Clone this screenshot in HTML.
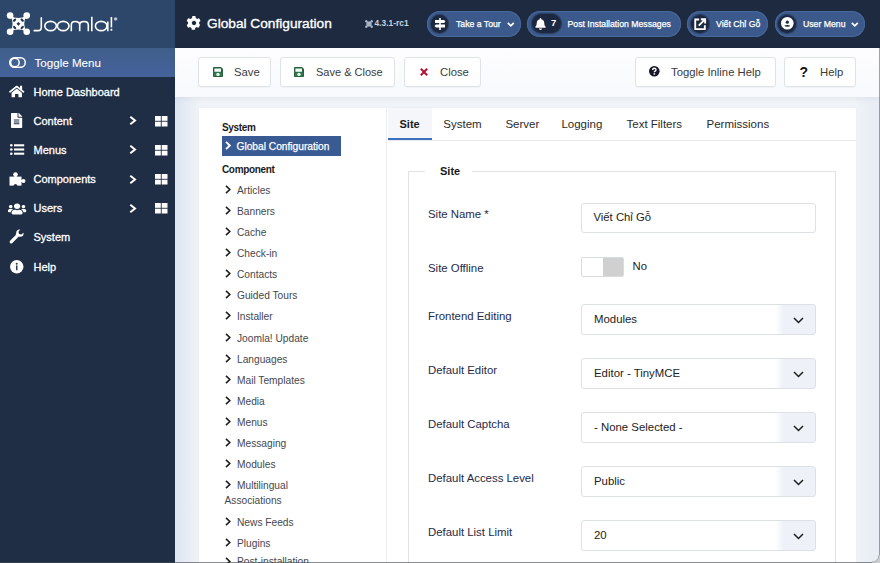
<!DOCTYPE html>
<html><head><meta charset="utf-8">
<style>
*{box-sizing:border-box;margin:0;padding:0}
html,body{width:880px;height:563px;overflow:hidden}
body{position:relative;background:linear-gradient(90deg,#dce5f2 175px,#e4eaf4 183px,#eef2f6 196px,#f0f3f7 199px,#f0f3f7 856px,#e9eef6 870px);font-family:"Liberation Sans",sans-serif;color:#212529}
.a{position:absolute}
.t{position:absolute;white-space:nowrap;line-height:1}
svg{position:absolute;overflow:visible}
#hdr{left:0;top:0;width:880px;height:48px;background:#1d2a40}
#logo{left:0;top:0;width:175px;height:48px;background:#2d476b}
#side{left:0;top:48px;width:175px;height:515px;background:#1f2d45}
#tog{left:0;top:48px;width:175px;height:29px;background:linear-gradient(180deg,#405e8a,#44639c)}
.mi{color:#fff;font-size:11px;-webkit-text-stroke:0.3px #fff}
.pill{position:absolute;top:11px;height:26px;border-radius:13px;background:#3b5a8b;box-shadow:inset 0 0 0 1px #48679a}
.pc{position:absolute;top:4.25px;width:17.5px;height:17.5px;border-radius:9px;background:#1c2840;box-shadow:0 0 0 1.2px #2c4166}
.pt{position:absolute;color:#fff;font-size:8.7px;line-height:1;white-space:nowrap;top:9px;-webkit-text-stroke:0.25px #fff}
#tb{left:175px;top:48px;width:705px;height:49px;background:linear-gradient(180deg,#fdfdfe,#f7f9fc);box-shadow:0 2px 6px rgba(30,50,90,.06)}
.btn{position:absolute;top:57px;height:30px;background:#fff;border:1px solid #dfe3e8;border-radius:3px;box-shadow:0 1px 1px rgba(0,0,0,.03)}
.bt{position:absolute;color:#3b3b3b;font-size:11.3px;line-height:1;white-space:nowrap;top:9px}
#lp{left:199px;top:108px;width:188px;height:455px;background:#fff;border-right:1px solid #f0f2f5;box-shadow:0 0 3px rgba(40,60,100,.03)}
#rp{left:387px;top:108px;width:469px;height:455px;background:#fff;box-shadow:0 0 3px rgba(40,60,100,.03)}
.li{position:absolute;color:#45484d;font-size:10.2px;line-height:1;white-space:nowrap}
.lh{position:absolute;color:#1b1b1b;font-size:10px;letter-spacing:-0.35px;font-weight:700;line-height:1;white-space:nowrap}
.lab{position:absolute;left:428px;color:#262a48;font-size:11.4px;line-height:1;white-space:nowrap}
.sel{position:absolute;left:581px;width:235px;height:30.5px;border:1px solid #dde1e6;border-radius:3px;background:linear-gradient(90deg,#fff 0,#fff 83%,#eef1f7 86.5%,#eef1f7 100%)}
.sv{position:absolute;left:12px;top:8.6px;font-size:11.4px;color:#222;line-height:1;white-space:nowrap}
.tab{position:absolute;top:118.6px;font-size:11.5px;color:#2b2b2b;line-height:1;white-space:nowrap}
</style></head><body>
<div class="a" id="hdr"></div>
<div class="a" id="logo"></div>
<div class="a" id="side"></div>
<div class="a" id="tog"></div>

<!-- logo -->
<svg style="left:0;top:0" width="125" height="48" viewBox="0 0 125 48">
 <path d="M10.1 15.6 Q18.4 20.6 26.7 15.6 Q21.8 23.8 26.7 31.8 Q18.4 27 10.1 31.8 Q15 23.8 10.1 15.6 Z" fill="#fff"/>
 <g fill="#fff"><circle cx="10.1" cy="15.6" r="3.3"/><circle cx="26.7" cy="15.6" r="3.3"/><circle cx="10.1" cy="31.8" r="3.3"/><circle cx="26.7" cy="31.8" r="3.3"/></g>
 <g fill="#22344f"><ellipse cx="14.6" cy="20.1" rx="2" ry="1.15" transform="rotate(-45 14.6 20.1)"/><ellipse cx="22.2" cy="20.1" rx="2" ry="1.15" transform="rotate(45 22.2 20.1)"/><ellipse cx="14.6" cy="27.5" rx="2" ry="1.15" transform="rotate(45 14.6 27.5)"/><ellipse cx="22.2" cy="27.5" rx="2" ry="1.15" transform="rotate(-45 22.2 27.5)"/></g>
 <path d="M18.4 21.9 L20.3 23.8 L18.4 25.7 L16.5 23.8 Z" fill="#22344f"/>
 <g fill="none" stroke="#fff" stroke-width="1.6" stroke-linecap="butt">
  <path d="M41.3 17.2 V27.2 Q41.3 30.6 37.9 30.6 H33.6"/>
  <ellipse cx="50.6" cy="26" rx="5.8" ry="4.6"/>
  <ellipse cx="63.2" cy="26" rx="5.8" ry="4.6"/>
  <path d="M71.3 31.2 V25 Q71.3 21.5 75 21.5 Q79.7 21.5 79.7 25 V31.2 M79.7 25 Q79.7 21.5 84 21.5 Q88.3 21.5 88.3 25 V31.2"/>
  <path d="M91.8 16.8 V31.2"/>
  <ellipse cx="101.2" cy="26" rx="5.8" ry="4.6"/>
  <path d="M107.8 21.4 V31.2"/>
  <path d="M111.4 17 V27.4"/>
 </g>
 <rect x="110.5" y="28.8" width="1.8" height="1.9" fill="#fff"/>
 <circle cx="115.6" cy="18.9" r="1.7" fill="#b9c4d6"/>
</svg>

<!-- header title -->
<svg style="left:186.7px;top:16px" width="14" height="14" viewBox="0 0 512 512"><path fill="#fff" d="M487 316l-43-25c4-24 4-48 0-71l43-25c5-3 7-9 5-14-11-36-31-69-56-96-4-4-10-5-15-2l-43 25c-18-16-39-28-62-36V22c0-6-4-11-9-12-37-8-75-8-111 0-5 1-9 6-9 12v50c-23 8-44 20-62 36L62 83c-5-3-11-2-15 2-25 27-45 60-56 96-2 5 0 11 5 14l43 25c-4 24-4 48 0 71l-43 25c-5 3-7 9-5 14 11 36 31 69 56 96 4 4 10 5 15 2l43-25c18 16 39 28 62 36v50c0 6 4 11 9 12 37 8 75 8 111 0 5-1 9-6 9-12v-50c23-8 44-20 62-36l43 25c5 3 11 2 15-2 25-27 45-60 56-96 2-5 0-11-5-14zM256 336c-44 0-80-36-80-80s36-80 80-80 80 36 80 80-36 80-80 80z"/></svg>
<div class="t" style="left:207px;top:17px;color:#fff;font-size:13.7px;-webkit-text-stroke:0.35px #fff">Global Configuration</div>
<svg style="left:365px;top:19.6px" width="8" height="8" viewBox="0 0 8 8"><g fill="none" stroke="#aab5c7" stroke-width="1.3"><path d="M1.5 1.5L6.5 6.5M6.5 1.5L1.5 6.5"/><path d="M4 1.8L6.2 4L4 6.2L1.8 4Z"/></g><g fill="#aab5c7"><circle cx="1.3" cy="1.3" r="1.2"/><circle cx="6.7" cy="1.3" r="1.2"/><circle cx="1.3" cy="6.7" r="1.2"/><circle cx="6.7" cy="6.7" r="1.2"/></g></svg>
<div class="t" style="left:374.6px;top:19.3px;color:#c8d1de;font-size:8.4px;font-weight:700">4.3.1-rc1</div>

<!-- pills -->
<div class="pill" style="left:427px;width:94px"><div class="pc" style="left:3.75px"></div><div class="pt" style="left:29px">Take a Tour</div></div>
<div class="pill" style="left:527px;width:154px"><div class="pc" style="left:5px;width:28.5px;top:3px;height:19px;border-radius:9.5px"></div><div class="t" style="left:24px;top:7.2px;color:#fff;font-size:9.5px;font-weight:700">7</div><div class="pt" style="left:40.5px">Post Installation Messages</div></div>
<div class="pill" style="left:687px;width:81px"><div class="pc" style="left:4px"></div><div class="pt" style="left:29px">Viết Chỉ Gỗ</div></div>
<div class="pill" style="left:775px;width:90px"><div class="pc" style="left:3.25px"></div><div class="pt" style="left:28px">User Menu</div></div>
<!-- pill icons -->
<svg style="left:434px;top:18px" width="12" height="12" viewBox="0 0 12 12"><g fill="#fff"><rect x="5.2" y="0" width="1.6" height="12"/><path d="M1 2H10L11.5 3.5L10 5H1Z"/><path d="M2 6.5H11V9.5H2L0.5 8Z"/></g></svg>
<svg style="left:506.8px;top:21.8px" width="7.6" height="5" viewBox="0 0 7.6 5"><path d="M0.8 0.8L3.8 3.8L6.8 0.8" fill="none" stroke="#fff" stroke-width="1.7"/></svg>
<svg style="left:535px;top:17.5px" width="11" height="12" viewBox="0 0 448 512"><path fill="#fff" d="M224 512c35 0 64-29 64-64H160c0 35 29 64 64 64zm215-150c-19-21-55-52-55-154 0-78-54-140-128-155V32c0-18-14-32-32-32s-32 14-32 32v21C118 68 64 130 64 208c0 102-36 133-55 154-6 6-9 14-9 22 0 16 13 32 32 32h384c19 0 32-16 32-32 0-8-3-16-9-22z"/></svg>
<svg style="left:693.6px;top:18px" width="12.4" height="12.4" viewBox="0 0 12 12"><g fill="none" stroke="#fff" stroke-width="1.8"><path d="M5 1.5H1.2V10.8H10.5V7"/><path d="M4.6 7.4L10.6 1.4M6.6 1.2H10.8V5.4"/></g></svg>
<svg style="left:780.8px;top:17.3px" width="12.6" height="12.6" viewBox="0 0 12 12"><circle cx="6" cy="6" r="6" fill="#fff"/><circle cx="6" cy="4.9" r="1.5" fill="#1c2840"/><path d="M3.2 8.2Q6 7.2 8.8 8.2Q8.6 9.4 6 9.4Q3.4 9.4 3.2 8.2Z" fill="#1c2840"/></svg>
<svg style="left:850.8px;top:21.6px" width="7.6" height="5" viewBox="0 0 7.6 5"><path d="M0.8 0.8L3.8 3.8L6.8 0.8" fill="none" stroke="#fff" stroke-width="1.7"/></svg>

<!-- sidebar menu -->
<div class="t mi" style="left:34.5px;top:56.5px;font-size:11.6px;-webkit-text-stroke:0.1px #fff">Toggle Menu</div>
<div class="t mi" style="left:33.5px;top:87px">Home Dashboard</div>
<div class="t mi" style="left:33.5px;top:116px">Content</div>
<div class="t mi" style="left:33.5px;top:145px">Menus</div>
<div class="t mi" style="left:33.5px;top:173.8px">Components</div>
<div class="t mi" style="left:33.5px;top:202.8px">Users</div>
<div class="t mi" style="left:33.5px;top:232.4px">System</div>
<div class="t mi" style="left:33.5px;top:261.6px">Help</div>
<!-- sidebar icons -->
<svg style="left:8.5px;top:57px" width="17" height="11" viewBox="0 0 17 11"><rect x="0.75" y="0.75" width="15.5" height="9.5" rx="4.75" fill="none" stroke="#fff" stroke-width="1.5"/><circle cx="5.9" cy="5.5" r="4.3" fill="none" stroke="#fff" stroke-width="1.5"/></svg>
<svg style="left:8.7px;top:85.2px" width="15.5" height="12.8" viewBox="0 0 576 500" preserveAspectRatio="none"><path fill="#fff" d="M280 148L96 300v164c0 9 7 16 16 16h112V368c0-9 7-16 16-16h96c9 0 16 7 16 16v112h112c9 0 16-7 16-16V300L296 148c-5-4-11-4-16 0zM571 251L488 183V44c0-7-5-12-12-12h-56c-7 0-12 5-12 12v73L318 43c-18-15-43-15-61 0L4 251c-5 4-6 12-2 17l26 31c4 5 12 6 17 2L280 107c5-4 11-4 16 0l235 194c5 4 13 3 17-2l26-31c4-5 3-13-2-17z"/></svg>
<svg style="left:11.4px;top:113.4px" width="11.2" height="15" viewBox="0 0 384 512" preserveAspectRatio="none"><path fill="#fff" d="M224 136V0H24C11 0 0 11 0 24v464c0 13 11 24 24 24h336c13 0 24-11 24-24V160H248c-13 0-24-11-24-24zm64 236c0 7-5 12-12 12H108c-7 0-12-5-12-12v-8c0-7 5-12 12-12h168c7 0 12 5 12 12v8zm0-64c0 7-5 12-12 12H108c-7 0-12-5-12-12v-8c0-7 5-12 12-12h168c7 0 12 5 12 12v8zm0-72v8c0 7-5 12-12 12H108c-7 0-12-5-12-12v-8c0-7 5-12 12-12h168c7 0 12 5 12 12zm96-114v6H256V0h6c6 0 12 3 17 7l98 98c4 5 7 11 7 17z"/></svg>
<svg style="left:9.8px;top:144.2px" width="14.2" height="11" viewBox="0 0 14.2 11"><g fill="#fff"><circle cx="1.3" cy="1.3" r="1.3"/><circle cx="1.3" cy="5.5" r="1.3"/><circle cx="1.3" cy="9.7" r="1.3"/><rect x="4" y="0.25" width="10.2" height="2.1"/><rect x="4" y="4.45" width="10.2" height="2.1"/><rect x="4" y="8.65" width="10.2" height="2.1"/></g></svg>
<svg style="left:8.5px;top:171.5px" width="17" height="14" viewBox="0 0 17 14"><g fill="#fff"><rect x="0.5" y="4.6" width="12" height="9"/><circle cx="6.5" cy="2.5" r="2.3"/><rect x="5.5" y="3" width="2" height="2"/><circle cx="14.4" cy="9" r="2.1"/><rect x="12" y="8" width="2" height="2"/></g><circle cx="6.5" cy="13.6" r="1.7" fill="#1f2d45"/></svg>
<svg style="left:7.8px;top:202.6px" width="18.2" height="12" viewBox="0 10 640 490" preserveAspectRatio="none"><path fill="#fff" d="M96 224c35 0 64-29 64-64s-29-64-64-64-64 29-64 64 29 64 64 64zm448 0c35 0 64-29 64-64s-29-64-64-64-64 29-64 64 29 64 64 64zm32 32h-64c-18 0-34 7-45 19 40 22 69 62 75 109h66c18 0 32-14 32-32v-32c0-35-29-64-64-64zm-256 0c62 0 112-50 112-112S382 32 320 32 208 82 208 144s50 112 112 112zm77 32h-8c-21 10-44 16-69 16s-48-6-69-16h-8c-64 0-115 52-115 115v29c0 27 21 48 48 48h288c27 0 48-21 48-48v-29c0-63-52-115-115-115zm-223-13c-11-12-27-19-45-19H64c-35 0-64 29-64 64v32c0 18 14 32 32 32h66c6-47 35-87 75-109z"/></svg>
<svg style="left:8.9px;top:229.4px" width="15" height="15" viewBox="0 0 15 15"><path d="M2.2 12.8L8.2 6.8" stroke="#fff" stroke-width="3.2" stroke-linecap="round"/><path fill="#fff" d="M7.3 3.6Q7.3 0.6 10.6 0.4L11.2 0.5L9.4 2.7L10.1 4.9L12.3 5.6L14.5 3.8L14.6 4.4Q14.4 7.7 11.4 7.7Q9.9 7.7 8.8 7.2L6.6 5.6Q7.3 4.7 7.3 3.6Z"/></svg>
<svg style="left:10.1px;top:259.6px" width="13.5" height="13.5" viewBox="0 0 14 14"><circle cx="7" cy="7" r="7" fill="#fff"/><circle cx="7" cy="3.9" r="1" fill="#2a3550"/><rect x="6.25" y="5.6" width="1.5" height="5" fill="#2a3550"/></svg>
<!-- chevrons + grid icons -->
<svg style="left:129.3px;top:116px" width="8" height="9" viewBox="0 0 8 9"><path d="M1.3 0.8L6 4.5L1.3 8.2" fill="none" stroke="#fff" stroke-width="2"/></svg>
<svg style="left:129.3px;top:145px" width="8" height="9" viewBox="0 0 8 9"><path d="M1.3 0.8L6 4.5L1.3 8.2" fill="none" stroke="#fff" stroke-width="2"/></svg>
<svg style="left:129.3px;top:174.5px" width="8" height="9" viewBox="0 0 8 9"><path d="M1.3 0.8L6 4.5L1.3 8.2" fill="none" stroke="#fff" stroke-width="2"/></svg>
<svg style="left:129.3px;top:203.5px" width="8" height="9" viewBox="0 0 8 9"><path d="M1.3 0.8L6 4.5L1.3 8.2" fill="none" stroke="#fff" stroke-width="2"/></svg>
<svg style="left:154.5px;top:115.5px" width="12.5" height="10.5" viewBox="0 0 12.5 10.5"><g fill="#fff"><rect x="0" y="0" width="5.8" height="4.8"/><rect x="6.7" y="0" width="5.8" height="4.8"/><rect x="0" y="5.7" width="5.8" height="4.8"/><rect x="6.7" y="5.7" width="5.8" height="4.8"/></g></svg>
<svg style="left:154.5px;top:144.5px" width="12.5" height="10.5" viewBox="0 0 12.5 10.5"><g fill="#fff"><rect x="0" y="0" width="5.8" height="4.8"/><rect x="6.7" y="0" width="5.8" height="4.8"/><rect x="0" y="5.7" width="5.8" height="4.8"/><rect x="6.7" y="5.7" width="5.8" height="4.8"/></g></svg>
<svg style="left:154.5px;top:174px" width="12.5" height="10.5" viewBox="0 0 12.5 10.5"><g fill="#fff"><rect x="0" y="0" width="5.8" height="4.8"/><rect x="6.7" y="0" width="5.8" height="4.8"/><rect x="0" y="5.7" width="5.8" height="4.8"/><rect x="6.7" y="5.7" width="5.8" height="4.8"/></g></svg>
<svg style="left:154.5px;top:203px" width="12.5" height="10.5" viewBox="0 0 12.5 10.5"><g fill="#fff"><rect x="0" y="0" width="5.8" height="4.8"/><rect x="6.7" y="0" width="5.8" height="4.8"/><rect x="0" y="5.7" width="5.8" height="4.8"/><rect x="6.7" y="5.7" width="5.8" height="4.8"/></g></svg>

<!-- toolbar -->
<div class="a" id="tb"></div>
<div class="btn" style="left:198px;width:73px"><div class="bt" style="left:35px">Save</div></div>
<div class="btn" style="left:280px;width:115px"><div class="bt" style="left:35px;font-size:11px;top:9.2px">Save &amp; Close</div></div>
<div class="btn" style="left:404px;width:77px"><div class="bt" style="left:35px">Close</div></div>
<div class="btn" style="left:635px;width:141px"><div class="bt" style="left:35px">Toggle Inline Help</div></div>
<div class="btn" style="left:784px;width:72px"><div class="bt" style="left:35px">Help</div></div>

<!-- panels -->
<div class="a" id="lp"></div>
<div class="a" id="rp"></div>


<!-- toolbar icons -->
<svg style="left:213px;top:66.8px" width="10" height="10" viewBox="0 0 10 10"><path fill="#27633f" d="M0.8 0H8L10 2V9.2Q10 10 9.2 10H0.8Q0 10 0 9.2V0.8Q0 0 0.8 0Z"/><rect x="1.4" y="1.5" width="6.6" height="3.3" fill="#f4f8f5"/><rect x="1" y="5.4" width="8" height="3.6" fill="#2f7a4f"/><circle cx="5" cy="7.4" r="1.7" fill="#eef5ef"/></svg>
<svg style="left:294px;top:66.8px" width="10" height="10" viewBox="0 0 10 10"><path fill="#27633f" d="M0.8 0H8L10 2V9.2Q10 10 9.2 10H0.8Q0 10 0 9.2V0.8Q0 0 0.8 0Z"/><rect x="1.4" y="1.5" width="6.6" height="3.3" fill="#f4f8f5"/><rect x="1" y="5.4" width="8" height="3.6" fill="#2f7a4f"/><circle cx="5" cy="7.4" r="1.7" fill="#eef5ef"/></svg>
<svg style="left:419.6px;top:67.9px" width="8" height="8" viewBox="0 0 8 8"><path d="M0.8 0.8L7.2 7.2M7.2 0.8L0.8 7.2" stroke="#b3132f" stroke-width="2"/></svg>
<svg style="left:649px;top:66.4px" width="10.6" height="10.6" viewBox="0 0 12 12"><circle cx="6" cy="6" r="6" fill="#16162a"/><path d="M4.1 4.6Q4.1 2.6 6 2.6Q7.9 2.6 7.9 4.3Q7.9 5.3 6.8 5.9Q6 6.3 6 7.2" fill="none" stroke="#fff" stroke-width="1.6"/><rect x="5.2" y="8.1" width="1.7" height="1.7" fill="#fff"/></svg>
<div class="t" style="left:799.5px;top:64.5px;font-size:14px;font-weight:700;color:#111">?</div>

<!-- left panel headers -->
<div class="lh" style="left:222px;top:122.5px">System</div>
<div class="a" style="left:222px;top:136px;width:119px;height:20px;background:#3a5a94"></div>
<svg style="left:225px;top:140.8px" width="6" height="9" viewBox="0 0 6 9"><path d="M1 0.9L4.8 4.5L1 8.1" fill="none" stroke="#fff" stroke-width="1.9"/></svg>
<div class="li" style="left:236.5px;top:141.5px;color:#fff;-webkit-text-stroke:0.25px #fff;font-size:10.2px">Global Configuration</div>
<div class="lh" style="left:222px;top:165.3px">Component</div>

<!-- tabs -->
<div class="a" style="left:388px;top:108px;width:44px;height:32px;background:#f4f6fa"></div>
<div class="a" style="left:388px;top:140px;width:468px;height:1px;background:#e6e9ee"></div>
<div class="a" style="left:388px;top:137.5px;width:44px;height:2.5px;background:#3d6fbf"></div>
<div class="tab" style="left:399.5px;font-weight:700;color:#1a1a1a;font-size:11px">Site</div>
<div class="tab" style="left:443.3px">System</div>
<div class="tab" style="left:505.4px">Server</div>
<div class="tab" style="left:561.4px">Logging</div>
<div class="tab" style="left:626.5px">Text Filters</div>
<div class="tab" style="left:706.5px">Permissions</div>

<!-- fieldset -->
<div class="a" style="left:408px;top:171px;width:428px;height:400px;border:1px solid #dfe2e6"></div>
<div class="a" style="left:425px;top:165px;width:47px;height:12px;background:#fff"></div>
<div class="t" style="left:440px;top:165.5px;font-size:11px;font-weight:700;color:#1a1a1a">Site</div>

<!-- form -->
<div class="lab" style="top:209px">Site Name *</div>
<div class="a" style="left:581px;top:203px;width:235px;height:30px;border:1px solid #dde1e6;border-radius:3px;background:#fff"></div>
<div class="t" style="left:593.5px;top:212px;font-size:11.3px;color:#222">Viết Chỉ Gỗ</div>
<div class="lab" style="top:263px">Site Offline</div>
<div class="a" style="left:581px;top:256.5px;width:43px;height:20px;border:1px solid #d8dce2;border-radius:2px;background:linear-gradient(90deg,#fff 50%,#d0d0d0 50%)"></div>
<div class="t" style="left:632.5px;top:261px;font-size:11.3px;color:#222">No</div>
<div class="lab" style="top:310.5px">Frontend Editing</div>
<div class="sel" style="top:304px"><div class="sv">Modules</div></div>
<div class="lab" style="top:364.5px">Default Editor</div>
<div class="sel" style="top:358px"><div class="sv">Editor - TinyMCE</div></div>
<div class="lab" style="top:418.5px">Default Captcha</div>
<div class="sel" style="top:412px"><div class="sv">- None Selected -</div></div>
<div class="lab" style="top:472.5px">Default Access Level</div>
<div class="sel" style="top:466px"><div class="sv">Public</div></div>
<div class="lab" style="top:526.5px">Default List Limit</div>
<div class="sel" style="top:520px"><div class="sv">20</div></div>
<svg style="left:792.8px;top:316.6px" width="11" height="7" viewBox="0 0 11 7"><path d="M1 1L5.5 5.5L10 1" fill="none" stroke="#1e1e1e" stroke-width="1.5"/></svg>
<svg style="left:792.8px;top:370.6px" width="11" height="7" viewBox="0 0 11 7"><path d="M1 1L5.5 5.5L10 1" fill="none" stroke="#1e1e1e" stroke-width="1.5"/></svg>
<svg style="left:792.8px;top:424.6px" width="11" height="7" viewBox="0 0 11 7"><path d="M1 1L5.5 5.5L10 1" fill="none" stroke="#1e1e1e" stroke-width="1.5"/></svg>
<svg style="left:792.8px;top:478.6px" width="11" height="7" viewBox="0 0 11 7"><path d="M1 1L5.5 5.5L10 1" fill="none" stroke="#1e1e1e" stroke-width="1.5"/></svg>
<svg style="left:792.8px;top:532.6px" width="11" height="7" viewBox="0 0 11 7"><path d="M1 1L5.5 5.5L10 1" fill="none" stroke="#1e1e1e" stroke-width="1.5"/></svg>

<!-- window frame -->
<div class="a" style="left:0;top:562px;width:880px;height:1px;background:rgba(70,72,76,.63)"></div>
<div class="a" style="left:879px;top:48px;width:1px;height:515px;background:rgba(70,72,76,.5)"></div>
<svg style="left:872px;top:555px" width="8" height="8" viewBox="0 0 8 8"><path d="M8 0 V8 H0 V7 Q6 7 7 1 V0Z" fill="#c9cbce"/><path d="M0 7 Q6 7 7 0" fill="none" stroke="#a9acb0" stroke-width="1"/></svg>

<!-- left list -->
<svg style="left:225px;top:184.5px" width="6" height="9" viewBox="0 0 6 9"><path d="M1 0.9L4.8 4.5L1 8.1" fill="none" stroke="#1e1e1e" stroke-width="1.6"/></svg>
<div class="li" style="left:237px;top:185.5px">Articles</div>
<svg style="left:225px;top:205.5px" width="6" height="9" viewBox="0 0 6 9"><path d="M1 0.9L4.8 4.5L1 8.1" fill="none" stroke="#1e1e1e" stroke-width="1.6"/></svg>
<div class="li" style="left:237px;top:206.5px">Banners</div>
<svg style="left:225px;top:226.5px" width="6" height="9" viewBox="0 0 6 9"><path d="M1 0.9L4.8 4.5L1 8.1" fill="none" stroke="#1e1e1e" stroke-width="1.6"/></svg>
<div class="li" style="left:237px;top:227.5px">Cache</div>
<svg style="left:225px;top:247.5px" width="6" height="9" viewBox="0 0 6 9"><path d="M1 0.9L4.8 4.5L1 8.1" fill="none" stroke="#1e1e1e" stroke-width="1.6"/></svg>
<div class="li" style="left:237px;top:248.5px">Check-in</div>
<svg style="left:225px;top:268.5px" width="6" height="9" viewBox="0 0 6 9"><path d="M1 0.9L4.8 4.5L1 8.1" fill="none" stroke="#1e1e1e" stroke-width="1.6"/></svg>
<div class="li" style="left:237px;top:269.5px">Contacts</div>
<svg style="left:225px;top:290.0px" width="6" height="9" viewBox="0 0 6 9"><path d="M1 0.9L4.8 4.5L1 8.1" fill="none" stroke="#1e1e1e" stroke-width="1.6"/></svg>
<div class="li" style="left:237px;top:291.0px">Guided Tours</div>
<svg style="left:225px;top:311.0px" width="6" height="9" viewBox="0 0 6 9"><path d="M1 0.9L4.8 4.5L1 8.1" fill="none" stroke="#1e1e1e" stroke-width="1.6"/></svg>
<div class="li" style="left:237px;top:312.0px">Installer</div>
<svg style="left:225px;top:332.5px" width="6" height="9" viewBox="0 0 6 9"><path d="M1 0.9L4.8 4.5L1 8.1" fill="none" stroke="#1e1e1e" stroke-width="1.6"/></svg>
<div class="li" style="left:237px;top:333.5px">Joomla! Update</div>
<svg style="left:225px;top:353.5px" width="6" height="9" viewBox="0 0 6 9"><path d="M1 0.9L4.8 4.5L1 8.1" fill="none" stroke="#1e1e1e" stroke-width="1.6"/></svg>
<div class="li" style="left:237px;top:354.5px">Languages</div>
<svg style="left:225px;top:374.5px" width="6" height="9" viewBox="0 0 6 9"><path d="M1 0.9L4.8 4.5L1 8.1" fill="none" stroke="#1e1e1e" stroke-width="1.6"/></svg>
<div class="li" style="left:237px;top:375.5px">Mail Templates</div>
<svg style="left:225px;top:395.5px" width="6" height="9" viewBox="0 0 6 9"><path d="M1 0.9L4.8 4.5L1 8.1" fill="none" stroke="#1e1e1e" stroke-width="1.6"/></svg>
<div class="li" style="left:237px;top:396.5px">Media</div>
<svg style="left:225px;top:416.5px" width="6" height="9" viewBox="0 0 6 9"><path d="M1 0.9L4.8 4.5L1 8.1" fill="none" stroke="#1e1e1e" stroke-width="1.6"/></svg>
<div class="li" style="left:237px;top:417.5px">Menus</div>
<svg style="left:225px;top:437.5px" width="6" height="9" viewBox="0 0 6 9"><path d="M1 0.9L4.8 4.5L1 8.1" fill="none" stroke="#1e1e1e" stroke-width="1.6"/></svg>
<div class="li" style="left:237px;top:438.5px">Messaging</div>
<svg style="left:225px;top:458.5px" width="6" height="9" viewBox="0 0 6 9"><path d="M1 0.9L4.8 4.5L1 8.1" fill="none" stroke="#1e1e1e" stroke-width="1.6"/></svg>
<div class="li" style="left:237px;top:459.5px">Modules</div>
<svg style="left:225px;top:480.0px" width="6" height="9" viewBox="0 0 6 9"><path d="M1 0.9L4.8 4.5L1 8.1" fill="none" stroke="#1e1e1e" stroke-width="1.6"/></svg>
<div class="li" style="left:237px;top:481.0px">Multilingual</div>
<svg style="left:225px;top:516.5px" width="6" height="9" viewBox="0 0 6 9"><path d="M1 0.9L4.8 4.5L1 8.1" fill="none" stroke="#1e1e1e" stroke-width="1.6"/></svg>
<div class="li" style="left:237px;top:517.5px">News Feeds</div>
<svg style="left:225px;top:537.5px" width="6" height="9" viewBox="0 0 6 9"><path d="M1 0.9L4.8 4.5L1 8.1" fill="none" stroke="#1e1e1e" stroke-width="1.6"/></svg>
<div class="li" style="left:237px;top:538.5px">Plugins</div>
<svg style="left:225px;top:556.5px" width="6" height="9" viewBox="0 0 6 9"><path d="M1 0.9L4.8 4.5L1 8.1" fill="none" stroke="#1e1e1e" stroke-width="1.6"/></svg>
<div class="li" style="left:237px;top:557.3px">Post-installation</div>
<div class="li" style="left:224.5px;top:495.5px">Associations</div>
</body></html>
